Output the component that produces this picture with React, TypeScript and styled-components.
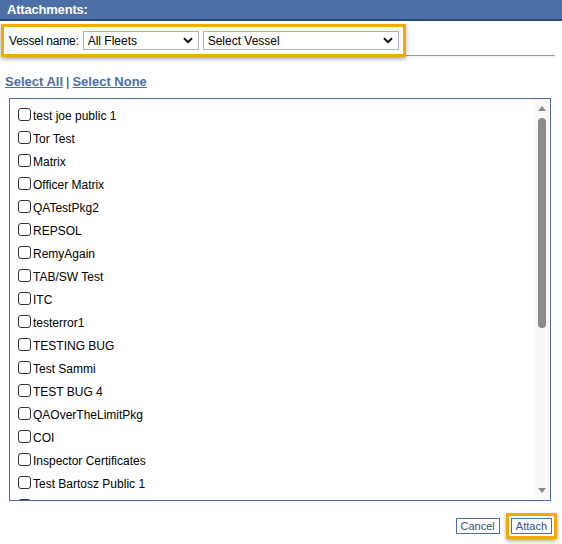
import { FC } from 'react';
import styled, { createGlobalStyle } from 'styled-components';

const packages = [
  'test joe public 1',
  'Tor Test',
  'Matrix',
  'Officer Matrix',
  'QATestPkg2',
  'REPSOL',
  'RemyAgain',
  'TAB/SW Test',
  'ITC',
  'testerror1',
  'TESTING BUG',
  'Test Sammi',
  'TEST BUG 4',
  'QAOverTheLimitPkg',
  'COI',
  'Inspector Certificates',
  'Test Bartosz Public 1',
  'Test Bartosz Public 2',
];

const GlobalStyle = createGlobalStyle`
  html, body {
    margin: 0;
    padding: 0;
    background: #fff;
  }
  body {
    font-family: Tahoma, "Liberation Sans", Arial, sans-serif;
    font-size: 12px;
    color: #000;
  }
`;

export default function App() {
  return (
    <>
      <GlobalStyle />
      <Page>
        <Header>Attachments:</Header>
        <FilterArea>
          <Highlight>
            <Label>Vessel name:</Label>
            <Dropdown $width={116}>
              <span>All Fleets</span>
              <Chevron />
            </Dropdown>
            <Dropdown $width={196}>
              <span>Select Vessel</span>
              <Chevron />
            </Dropdown>
          </Highlight>
          <Rule />
        </FilterArea>
        <Links>
          <LinkText>Select All</LinkText>
          <Divider>|</Divider>
          <LinkText>Select None</LinkText>
        </Links>
        <ListBox>
          <Items>
            {packages.map((name) => (
              <Item key={name}>
                <Box />
                <span>{name}</span>
              </Item>
            ))}
          </Items>
          <ScrollBar>
            <Arrow $up />
            <Thumb />
            <Track />
            <Arrow />
          </ScrollBar>
        </ListBox>
        <Footer>
          <Button>Cancel</Button>
          <Focused>
            <Button>Attach</Button>
          </Focused>
        </Footer>
      </Page>
    </>
  );
}

const Chevron: FC<{}> = () => (
  <svg width="10" height="7" viewBox="0 0 10 7">
    <path d="M1 1.2 L5 5.2 L9 1.2" fill="none" stroke="#111" strokeWidth="2" />
  </svg>
);

const Page = styled.div`
  width: 562px;
  height: 544px;
  display: flex;
  flex-direction: column;
`;

const Header = styled.div`
  height: 19px;
  background: #4c6fa6;
  border-bottom: 2px solid #27467a;
  color: #fff;
  font-weight: bold;
  font-size: 13px;
  letter-spacing: -0.2px;
  line-height: 19px;
  padding-left: 7px;
`;

const FilterArea = styled.div`
  display: flex;
  flex-direction: column;
  padding-top: 3px;
`;

const Highlight = styled.div`
  align-self: flex-start;
  display: flex;
  align-items: center;
  gap: 4px;
  margin-left: 1px;
  width: 394px;
  height: 27px;
  padding: 0 0 0 5px;
  border: 3px solid #f6a900;
  box-shadow: 0 2px 4px rgba(0, 0, 0, 0.35);
  background: #fff;
  position: relative;
  z-index: 1;
`;

const Label = styled.span`
  font-size: 12px;
  letter-spacing: -0.2px;
`;

const Dropdown = styled.div<{ $width: number }>`
  width: ${(p) => p.$width}px;
  height: 19px;
  box-sizing: border-box;
  border: 1px solid #a9b4c4;
  display: flex;
  align-items: center;
  justify-content: space-between;
  padding: 0 5px 0 4px;
  font-size: 12px;
  background: #fff;
`;

const Rule = styled.div`
  margin: -2px 7px 0 9px;
  height: 1px;
  background: #9a9a9a;
  box-shadow: 0 1px 2px rgba(0, 0, 0, 0.12);
`;

const Links = styled.div`
  display: flex;
  align-items: center;
  gap: 3px;
  padding: 16px 0 0 5px;
  height: 18px;
`;

const LinkText = styled.span`
  color: #4a6fa8;
  font-weight: bold;
  font-size: 13px;
  text-decoration: underline;
`;

const Divider = styled.span`
  color: #333;
  font-size: 13px;
`;

const ListBox = styled.div`
  margin: 8px 11px 0 9px;
  height: 403px;
  box-sizing: border-box;
  border: 1px solid #4a6fa8;
  display: flex;
  overflow: hidden;
`;

const Items = styled.div`
  flex: 1;
  padding: 5px 0 0 8px;
  overflow: hidden;
`;

const Item = styled.div`
  display: flex;
  align-items: center;
  gap: 2px;
  height: 23px;
  font-size: 12px;
`;

const Box = styled.span`
  width: 13px;
  height: 13px;
  box-sizing: border-box;
  border: 1px solid #333;
  border-radius: 3px;
  background: #fff;
  flex-shrink: 0;
  margin-top: -2px;
`;

const ScrollBar = styled.div`
  width: 14px;
  margin-right: 1px;
  background: #f8f8f8;
  display: flex;
  flex-direction: column;
  align-items: center;
`;

const Arrow = styled.div<{ $up?: boolean }>`
  width: 0;
  height: 0;
  margin: ${(p) => (p.$up ? '7px 0 7px' : '0 0 7px')};
  border-left: 4px solid transparent;
  border-right: 4px solid transparent;
  ${(p) =>
    p.$up
      ? 'border-bottom: 5px solid #8a8a8a;'
      : 'border-top: 5px solid #8a8a8a;'}
`;

const Thumb = styled.div`
  width: 8px;
  height: 210px;
  border-radius: 4px;
  background: #8a8a8a;
`;

const Track = styled.div`
  flex: 1;
`;

const Footer = styled.div`
  display: flex;
  justify-content: flex-end;
  align-items: center;
  gap: 6px;
  padding: 12px 5px 0 0;
`;

const Focused = styled.div`
  border: 3px solid #f6a900;
  padding: 2px 2px;
  box-shadow: 0 2px 4px rgba(0, 0, 0, 0.35);
`;

const Button = styled.button`
  height: 16px;
  box-sizing: border-box;
  padding: 0 4px;
  background: #fff;
  border: 1px solid #4a6fa8;
  color: #34517f;
  font-family: Tahoma, "Liberation Sans", Arial, sans-serif;
  font-size: 11px;
  line-height: 14px;
`;
